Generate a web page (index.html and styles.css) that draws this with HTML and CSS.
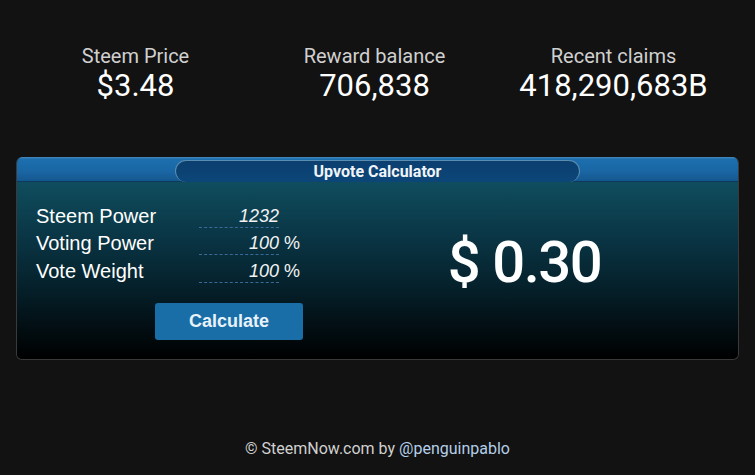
FILE: index.html
```html
<!DOCTYPE html>
<html>
<head>
<meta charset="utf-8">
<link rel="stylesheet" href="styles.css">
</head>
<body>
<div class="stats">
  <div class="stat"><div class="stat-label">Steem Price</div><div class="stat-value">$3.48</div></div>
  <div class="stat"><div class="stat-label">Reward balance</div><div class="stat-value">706,838</div></div>
  <div class="stat"><div class="stat-label">Recent claims</div><div class="stat-value">418,290,683B</div></div>
</div>
<div class="card">
  <div class="card-head"><div class="pill">Upvote Calculator</div></div>
  <div class="card-body">
    <div class="form">
      <div class="row"><span class="label">Steem Power</span><span class="field">1232</span></div>
      <div class="row"><span class="label">Voting Power</span><span class="field">100</span><span class="unit">%</span></div>
      <div class="row"><span class="label">Vote Weight</span><span class="field">100</span><span class="unit">%</span></div>
      <div class="btn-row"><button class="btn">Calculate</button></div>
    </div>
    <div class="result">$ 0.30</div>
  </div>
</div>
<div class="footer">© SteemNow.com by <span class="link">@penguinpablo</span></div>
</body>
</html>
```
FILE: styles.css
```css
html, body {
  margin: 0;
  padding: 0;
  background: #121212;
  font-family: Roboto, "Liberation Sans", sans-serif;
  color: #fff;
}
body {
  width: 755px;
  height: 475px;
  overflow: hidden;
}
.stats {
  display: grid;
  grid-template-columns: 239px 239px 239px;
  padding: 44px 16px 0 16px;
}
.stat {
  text-align: center;
}
.stat-label {
  font-size: 20px;
  line-height: 24px;
  color: #d0d0d0;
}
.stat-value {
  font-size: 31px;
  line-height: 36px;
  color: #fff;
}
.card {
  margin: 53px 16px 0 16px;
  border-radius: 6px;
  border: 1px solid #3a3a3a;
  border-top: none;
  overflow: hidden;
}
.card-head {
  height: 25px;
  background: linear-gradient(#4a8cc0 0px, #1c6fae 2px, #1a66a4 14px, #14568e 25px);
  display: flex;
  justify-content: center;
  box-sizing: border-box;
  padding-top: 3px;
  border-bottom: 1px solid #0d3a5a;
}
.pill {
  width: 405px;
  height: 22px;
  box-sizing: border-box;
  border-radius: 11px;
  background: linear-gradient(#0b3f70, #0c4678);
  border: 1px solid #5a8cb0;
  border-bottom: none;
  text-align: center;
  font-size: 16px;
  font-weight: 700;
  line-height: 21px;
  color: #f0f4f8;
}
.card-body {
  height: 177px;
  background: linear-gradient(#0f4d5e 0%, #0a3646 30%, #05202a 60%, #000 100%);
  display: grid;
  grid-template-columns: 293px 1fr;
  box-sizing: border-box;
  padding: 18px 0 0 19px;
}
.row {
  display: flex;
  align-items: flex-end;
  height: 27.5px;
}
.label {
  width: 163px;
  font-family: "Liberation Sans", Arial, sans-serif;
  font-size: 20px;
  line-height: 24px;
}
.field {
  width: 80px;
  text-align: right;
  font-family: "Liberation Sans", Arial, sans-serif;
  font-style: italic;
  font-size: 18px;
  line-height: 22px;
  border-bottom: 1px dashed #3a6a9a;
  color: #f2f2f2;
}
.unit {
  font-family: "Liberation Sans", Arial, sans-serif;
  font-size: 18px;
  line-height: 24px;
  margin-left: 5px;
  color: #f2f2f2;
}
.btn-row {
  padding: 20px 0 0 119px;
}
.btn {
  width: 148px;
  height: 37px;
  border: none;
  border-radius: 3px;
  background: #1a6ea8;
  color: #e8f2f8;
  font-family: "Liberation Sans", Arial, sans-serif;
  font-weight: 700;
  font-size: 18px;
  padding: 0;
}
.result {
  text-align: center;
  font-size: 58px;
  font-weight: 500;
  letter-spacing: -1.5px;
  padding-top: 28px;
  line-height: 68px;
  padding-right: 18px;
}
.footer {
  text-align: center;
  margin-top: 79px;
  font-size: 16px;
  color: #d0d0d0;
}
.link {
  color: #b4cfe8;
}
```
